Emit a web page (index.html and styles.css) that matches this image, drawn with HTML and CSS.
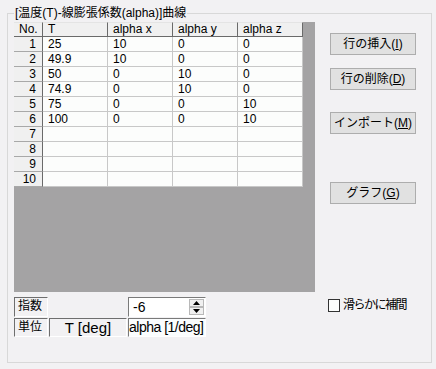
FILE: index.html
```html
<!DOCTYPE html>
<html lang="ja">
<head>
<meta charset="utf-8">
<title>温度-線膨張係数曲線</title>
<link rel="stylesheet" href="styles.css">
</head>
<body>
<div class="frame">
  <span class="legend">[温度(T)-線膨張係数(alpha)]曲線</span>
  <div class="top">
    <div class="grid">
      <table class="sheet">
        <thead>
          <tr><th class="c0">No.</th><th class="c1">T</th><th class="c1">alpha x</th><th class="c1">alpha y</th><th class="c1">alpha z</th></tr>
        </thead>
        <tbody>
          <tr><th>1</th><td>25</td><td>10</td><td>0</td><td>0</td></tr>
          <tr><th>2</th><td>49.9</td><td>10</td><td>0</td><td>0</td></tr>
          <tr><th>3</th><td>50</td><td>0</td><td>10</td><td>0</td></tr>
          <tr><th>4</th><td>74.9</td><td>0</td><td>10</td><td>0</td></tr>
          <tr><th>5</th><td>75</td><td>0</td><td>0</td><td>10</td></tr>
          <tr><th>6</th><td>100</td><td>0</td><td>0</td><td>10</td></tr>
          <tr><th>7</th><td></td><td></td><td></td><td></td></tr>
          <tr><th>8</th><td></td><td></td><td></td><td></td></tr>
          <tr><th>9</th><td></td><td></td><td></td><td></td></tr>
          <tr><th>10</th><td></td><td></td><td></td><td></td></tr>
        </tbody>
      </table>
    </div>
    <div class="buttons">
      <button class="btn b1">行の挿入(<u>I</u>)</button>
      <button class="btn b2">行の削除(<u>D</u>)</button>
      <button class="btn b3">インポート(<u>M</u>)</button>
      <button class="btn b4">グラフ(<u>G</u>)</button>
    </div>
  </div>
  <div class="bottom">
    <div class="params">
      <div class="lbl">指数</div>
      <div class="blank"></div>
      <div class="spin">
        <span class="spin-val">-6</span>
        <span class="arrows">
          <span class="arr"><svg width="7" height="4" viewBox="0 0 7 4"><path d="M3.5 0 L7 4 L0 4 Z" fill="#000"/></svg></span>
          <span class="arr"><svg width="7" height="4" viewBox="0 0 7 4"><path d="M0 0 L7 0 L3.5 4 Z" fill="#000"/></svg></span>
        </span>
      </div>
      <div class="lbl">単位</div>
      <div class="lbl unit">T [deg]</div>
      <div class="field">alpha [1/deg]</div>
    </div>
    <label class="check"><span class="box"></span><span class="check-text">滑らかに補間</span></label>
  </div>
</div>
</body>
</html>
```
FILE: styles.css
```css
* { box-sizing: border-box; }

body {
  margin: 0;
  width: 436px;
  height: 369px;
  overflow: hidden;
  background: #f2f1f3;
  color: #000;
  font: 12px "Liberation Sans", "Noto Sans CJK JP", sans-serif;
}

.frame {
  position: relative;
  margin: 13px 0 0 7px;
  width: 425px;
  height: 350px;
  border: 1px solid #d8d8d8;
  padding: 8px 0 0 6px;
}

.legend {
  position: absolute;
  left: 6px;
  top: -8px;
  padding: 0 1px;
  background: #f2f1f3;
  line-height: 14px;
}

.top { display: flex; }

.grid {
  width: 301px;
  height: 270px;
  background: #a4a3a4;
}

.sheet {
  border-collapse: separate;
  border-spacing: 0;
  table-layout: fixed;
  width: 289px;
}

.sheet th, .sheet td {
  padding: 0 5px;
  line-height: 14px;
  font-weight: normal;
  white-space: nowrap;
  overflow: hidden;
  text-align: left;
}

.sheet .c0 { width: 29px; }
.sheet .c1 { width: 65px; }

.sheet thead th {
  background: #f0f0f0;
  line-height: 13px;
  border-top: 1px solid #e4e4e4;
  border-right: 1px solid #6a6a6a;
  border-bottom: 1px solid #6a6a6a;
}

.sheet tbody th {
  background: #f0f0f0;
  text-align: right;
  padding-right: 6px;
  border-right: 1px solid #6a6a6a;
  border-bottom: 1px solid #a8a8a8;
}

.sheet tbody td {
  background: #fcfdfc;
  border-right: 1px solid #c8c8c8;
  border-bottom: 1px solid #c8c8c8;
}

.buttons {
  display: flex;
  flex-direction: column;
  margin-left: 15px;
  padding-top: 11px;
}

.btn {
  width: 86px;
  height: 22px;
  padding: 0;
  border: 1px solid #adadad;
  background: #e1e1e1;
  color: #000;
  font: 12px "Liberation Sans", "Noto Sans CJK JP", sans-serif;
  line-height: 20px;
  text-align: center;
}

.btn u { text-underline-offset: 1px; }

.b2 { margin-top: 13px; }
.b3 { margin-top: 22px; }
.b4 { margin-top: 48px; }

.bottom {
  display: flex;
  margin-top: 5px;
}

.params {
  display: grid;
  grid-template-columns: 34px 78px 78px;
  grid-template-rows: 20px 19px;
  column-gap: 1px;
  row-gap: 1px;
}

.lbl {
  border: 1px solid;
  border-color: #6e6e6e #ffffff #ffffff #6e6e6e;
  padding-left: 3px;
  line-height: 17px;
  font-size: 12px;
  white-space: nowrap;
}

.unit {
  text-align: center;
  padding-left: 0;
  font-size: 15px;
}

.spin {
  display: flex;
  background: #fff;
  border: 1px solid;
  border-color: #7a7a7a #ffffff #ffffff #7a7a7a;
}

.spin-val {
  padding-left: 4px;
  line-height: 18px;
  font-size: 14px;
}

.arrows {
  margin-left: auto;
  width: 16px;
  display: flex;
  flex-direction: column;
  padding: 1px 1px 1px 0;
}

.arr {
  flex: 1;
  display: flex;
  align-items: center;
  justify-content: center;
  background: #f0f0f0;
  border: 1px solid #b8b8b8;
}

.field {
  background: #fbfdfe;
  border: 1px solid;
  border-color: #7a7a7a #ffffff #ffffff #7a7a7a;
  line-height: 17px;
  font-size: 14px;
  letter-spacing: -0.5px;
  white-space: nowrap;
}

.check {
  display: flex;
  align-items: center;
  margin-left: 122px;
  height: 14px;
  margin-top: 1px;
}

.box {
  width: 12px;
  height: 13px;
  border: 1px solid #333;
  background: #fcfdfc;
  margin-right: 3px;
}

.check-text { letter-spacing: -1.5px; line-height: 14px; }
```
